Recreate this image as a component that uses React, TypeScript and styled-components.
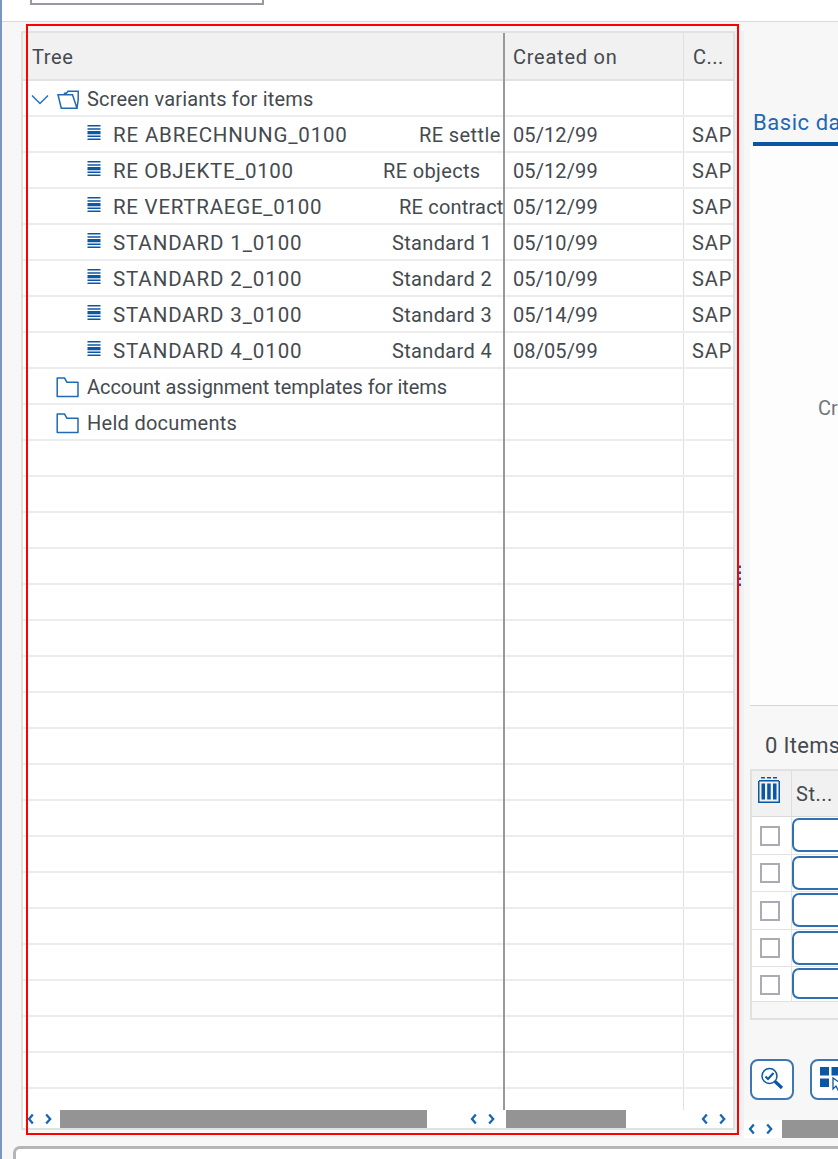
import React from "react";
import styled, { createGlobalStyle } from "styled-components";

const Global = createGlobalStyle`
  * { box-sizing: border-box; }
  body { margin: 0; background: #f7f7f7; overflow: hidden; }
`;

const Page = styled.div`
  position: relative;
  display: flex;
  flex-direction: column;
  width: 838px;
  height: 1159px;
  overflow: hidden;
  background: #f7f7f7;
  border-left: 2px solid #7896be;
  font-family: Roboto, "Liberation Sans", sans-serif;
  font-size: 20px;
  color: #454a4f;
  white-space: pre;
`;

const TopBar = styled.header`
  height: 22px;
  flex: none;
  padding-left: 28px;
  background: #fff;
  border-bottom: 1px solid #d9d9d9;
`;

const CommandField = styled.div`
  width: 234px;
  height: 5px;
  border: solid #9699a2;
  border-width: 0 2px 2px;
`;

const Workspace = styled.main`
  display: flex;
  flex: none;
  height: 1124px;
`;

const TreePanel = styled.section`
  width: 714px;
  height: 1099px;
  margin: 9px 0 0 19px;
  flex: none;
  border: 2px solid #e0e1e1;
  background: #fff;
`;

const HeadRow = styled.div`
  display: grid;
  grid-template-columns: 480px 1px 180px 49px;
  height: 48px;
  background: #f1f1f1;
  line-height: 49px;
  border-bottom: 2px solid #e2e2e2;
`;

const TreeRow = styled.div`
  display: grid;
  grid-template-columns: 480px 1px 180px 49px;
  height: 36px;
  border-bottom: 2px solid #ececec;
  line-height: 37px;
`;

const LastRow = styled(TreeRow)`
  height: 21px;
  border: 0;
`;

const Divider = styled.div<{ $end?: boolean }>`
  background: #999;
  width: 2px;
  height: ${(p) => (p.$end ? "100%" : "calc(100% + 2px)")};
`;

const Cell = styled.div<{ $pad?: number; $line?: boolean }>`
  display: flex;
  align-items: flex-start;
  overflow: hidden;
  min-width: 0;
  padding-left: ${(p) => p.$pad ?? 9}px;
  ${(p) => p.$line && "border-right: 1px solid #e0e0e0;"}
`;

const Label = styled.span<{ $track?: number; $width?: number }>`
  flex: none;
  letter-spacing: ${(p) => p.$track ?? 0}px;
  ${(p) => p.$width && `width: ${p.$width}px;`}
`;

const VariantName = styled(Label)`
  font-size: 20.5px;
`;

const IconSlot = styled.span<{ $w: number; $top: number }>`
  flex: none;
  width: ${(p) => p.$w}px;
  padding-top: ${(p) => p.$top}px;
  line-height: 0;
`;

const ScrollBar = styled.div`
  display: flex;
  align-items: center;
  height: 18px;
`;

const Thumb = styled.div<{ $w: number; $ml?: number }>`
  flex: none;
  width: ${(p) => p.$w}px;
  height: 18px;
  margin-left: ${(p) => p.$ml ?? 0}px;
  background: #949494;
`;

const Arrows = styled.span<{ $ml: number }>`
  display: flex;
  flex: none;
  margin-left: ${(p) => p.$ml}px;
`;

const Splitter = styled.div`
  display: flex;
  align-items: center;
  width: 9px;
  height: 1099px;
  margin-top: 9px;
  padding: 0 0 10px 3px;
  flex: none;
  background: #eff1f2;
`;

const Side = styled.section`
  display: flex;
  flex-direction: column;
  flex: none;
  width: 94px;
  overflow: hidden;
`;

const TabStrip = styled.nav`
  height: 124px;
  margin-left: 6px;
  padding: 84px 0 0 3px;
  flex: none;
`;

const Tab = styled.div`
  width: 160px;
  height: 40px;
  border-bottom: 4px solid #0b55a4;
  color: #1f68b4;
  font-size: 22px;
  letter-spacing: 0.55px;
  line-height: 33px;
`;

const TabBody = styled.div`
  height: 560px;
  margin-left: 6px;
  padding: 249px 0 0 68px;
  flex: none;
  background: #fdfdfd;
  border-bottom: 1px solid #d5d5d5;
  color: #74777a;
  line-height: 26px;
`;

const ItemsTitle = styled.h2`
  height: 63px;
  margin: 0 0 0 21px;
  flex: none;
  font-size: 22px;
  font-weight: 400;
  line-height: 79px;
`;

const ItemTable = styled.div`
  width: 160px;
  height: 251px;
  flex: none;
  margin-left: 6px;
  border: 2px solid #e0e1e1;
`;

const ItemHead = styled.div`
  display: flex;
  height: 46px;
  background: #f1f1f1;
  border-bottom: 1px solid #d9d9d9;
  line-height: 46px;
`;

const HeadIcon = styled.span`
  width: 40px;
  padding: 6px 0 0 5px;
  border-right: 1px solid #dedede;
  line-height: 0;
`;

const ItemRow = styled.div<{ $h: number }>`
  display: flex;
  align-items: flex-start;
  height: ${(p) => p.$h}px;
  background: #fff;
  border-bottom: 1px solid #e2e2e2;
`;

const CheckCell = styled.div<{ $top: number }>`
  width: 40px;
  height: 100%;
  padding: ${(p) => p.$top}px 0 0 8px;
  border-right: 1px solid #e2e2e2;
`;

const CheckBox = styled.div`
  width: 20px;
  height: 20px;
  border: 2px solid #a9acb4;
`;

const Field = styled.div<{ $h: number }>`
  width: 110px;
  height: ${(p) => p.$h}px;
  margin-top: 1px;
  border: 2px solid #2f70b3;
  border-radius: 7px;
  background: #fff;
`;

const Toolbar = styled.div`
  display: flex;
  gap: 16px;
  margin: 39px 0 0 6px;
  flex: none;
`;

const ToolButton = styled.button`
  display: flex;
  align-items: flex-start;
  flex: none;
  width: 44px;
  height: 41px;
  padding: 6px 0 0 8px;
  border: 2px solid #3d77b4;
  border-radius: 8px;
  background: #fff;
`;

const SideScroll = styled.div`
  display: flex;
  align-items: center;
  flex: none;
  height: 18px;
  margin-top: 20px;
  background: #fff;
`;

const BottomPanel = styled.footer`
  width: 900px;
  height: 60px;
  flex: none;
  margin-left: 11px;
  border: 3px solid #b5b5b5;
  border-radius: 7px;
  background: #fff;
`;

const FocusFrame = styled.div`
  position: absolute;
  left: 24px;
  top: 24px;
  width: 713px;
  height: 1111px;
  border: 2px solid #f00;
`;

const blue = "#0b57a4";

const ScrollArrows = ({ ml }: { ml: number }) => (
  <Arrows $ml={ml}>
    <svg width="26" height="12" viewBox="0 0 26 12" fill="none" stroke="#1766b5" strokeWidth="2.300">
      <path d="M5.800 1.500 2 6l3.800 4.500M19.200 1.500l4 4.500-4 4.500" />
    </svg>
  </Arrows>
);

const OpenFolder = () => (
  <svg width="23" height="20" viewBox="0 0 23 20" fill="none" stroke="#2069b4" strokeWidth="1.500">
    <path d="M1 4.700H15.500L20 18.300H4.300L1 4.700ZM7.500 4.500V3.300H9.500L11 1.300H21.200V10L20 18" />
  </svg>
);

const Folder = () => (
  <svg width="24" height="21" viewBox="0 0 24 21" fill="none" stroke="#2069b4" strokeWidth="1.500" strokeLinejoin="round">
    <path d="M1.200 1H8.500L11 5.300H22V19.500H1.200Z" />
  </svg>
);

const Lines = () => (
  <svg width="14" height="16" viewBox="0 0 14 16" fill={blue}>
    <path d="M.5 0h13v1.400H.5zM.5 3.200h13v1.500H.5zM.5 6h13v3.200H.5zM.5 10.600h13V12H.5zM.5 13.600h13V15H.5z" />
  </svg>
);

type Variant = { name: string; track: number; desc: string; dTrack: number; offset: number; date: string };

const variants: Variant[] = [
  { name: "RE ABRECHNUNG_0100", track: 0.84, desc: "RE settle", dTrack: 0.4, offset: 306, date: "05/12/99" },
  { name: "RE OBJEKTE_0100", track: 0.62, desc: "RE objects", dTrack: 0.35, offset: 270, date: "05/12/99" },
  { name: "RE VERTRAEGE_0100", track: 0.74, desc: "RE contract", dTrack: 0.2, offset: 286, date: "05/12/99" },
  { name: "STANDARD 1_0100", track: 0.88, desc: "Standard 1", dTrack: 0.35, offset: 279, date: "05/10/99" },
  { name: "STANDARD 2_0100", track: 0.88, desc: "Standard 2", dTrack: 0.35, offset: 279, date: "05/10/99" },
  { name: "STANDARD 3_0100", track: 0.88, desc: "Standard 3", dTrack: 0.35, offset: 279, date: "05/14/99" },
  { name: "STANDARD 4_0100", track: 0.88, desc: "Standard 4", dTrack: 0.35, offset: 279, date: "08/05/99" },
];

const folders = [
  { name: "Account assignment templates for items", track: -0.06 },
  { name: "Held documents", track: 0.28 },
];

const itemRows = [
  { h: 38, field: 34, top: 9 },
  { h: 37, field: 34, top: 8 },
  { h: 38, field: 34, top: 9 },
  { h: 37, field: 34, top: 8 },
  { h: 35, field: 31, top: 8 },
];

export default function App() {
  return (
    <Page>
      <Global />
      <TopBar>
        <CommandField />
      </TopBar>
      <Workspace>
        <TreePanel>
          <HeadRow>
            <Cell $pad={9}><Label $track={0.6}>Tree</Label></Cell>
            <Divider />
            <Cell $line $pad={9}><Label $track={0.75}>Created on</Label></Cell>
            <Cell $pad={9}><Label $track={0.5}>C...</Label></Cell>
          </HeadRow>
          <TreeRow>
            <Cell $pad={8}>
              <IconSlot $w={26} $top={13}>
                <svg width="18" height="12" viewBox="0 0 18 12" fill="none" stroke="#2670b8" strokeWidth="1.500">
                  <path d="M1 1.500 9 9.500 17 1.500" />
                </svg>
              </IconSlot>
              <IconSlot $w={30} $top={9}><OpenFolder /></IconSlot>
              <Label $track={0.18}>Screen variants for items</Label>
            </Cell>
            <Divider />
            <Cell $line />
            <Cell />
          </TreeRow>
          {variants.map((v) => (
            <TreeRow key={v.name}>
              <Cell $pad={64}>
                <IconSlot $w={26} $top={8}><Lines /></IconSlot>
                <VariantName $track={v.track} $width={v.offset}>{v.name}</VariantName>
                <Label $track={v.dTrack}>{v.desc}</Label>
              </Cell>
              <Divider />
              <Cell $line $pad={9}><Label $track={0.1}>{v.date}</Label></Cell>
              <Cell $pad={8}><Label $track={0.9}>SAP</Label></Cell>
            </TreeRow>
          ))}
          {folders.map((f) => (
            <TreeRow key={f.name}>
              <Cell $pad={33}>
                <IconSlot $w={31} $top={8}><Folder /></IconSlot>
                <Label $track={f.track}>{f.name}</Label>
              </Cell>
              <Divider />
              <Cell $line />
              <Cell />
            </TreeRow>
          ))}
          {Array.from({ length: 18 }, (_, i) => (
            <TreeRow key={i}>
              <Cell />
              <Divider />
              <Cell $line />
              <Cell />
            </TreeRow>
          ))}
          <LastRow>
            <Cell />
            <Divider $end />
            <Cell $line />
            <Cell />
          </LastRow>
          <ScrollBar>
            <ScrollArrows ml={4} />
            <Thumb $w={367} $ml={7} />
            <ScrollArrows ml={43} />
            <Thumb $w={120} $ml={10} />
            <ScrollArrows ml={75} />
          </ScrollBar>
        </TreePanel>
        <Splitter>
          <svg width="4" height="22" viewBox="0 0 4 22" fill={blue}>
            <path d="M.500 .500h2.500v2.500h-2.500zM.500 6.500h2.500v2.500h-2.500zM.500 12.500h2.500v2.500h-2.500zM.500 18.500h2.500v2.500h-2.500z" />
          </svg>
        </Splitter>
        <Side>
          <TabStrip>
            <Tab>Basic data</Tab>
          </TabStrip>
          <TabBody>Credit</TabBody>
          <ItemsTitle><Label $track={0.3}>0 Items</Label></ItemsTitle>
          <ItemTable>
            <ItemHead>
              <HeadIcon>
                <svg width="24" height="28" viewBox="0 0 24 28" fill={blue}>
                  <path d="M4 0h4v1.500H4zM10 0h4v1.500h-4zM16 0h4v1.500h-4zM2 3h20v1.500H2zM1 4h1.500v22H1zM21.500 4H23v22h-1.500zM1 24.500h22V26H1zM4.500 6.500h3.500v16H4.500zM10.200 6.500h3.500v16h-3.500zM16 6.500h3.500v16H16z" />
                </svg>
              </HeadIcon>
              <Cell $pad={4}><Label $track={0.5}>St...</Label></Cell>
            </ItemHead>
            {itemRows.map((r, i) => (
              <ItemRow key={i} $h={r.h}>
                <CheckCell $top={r.top}><CheckBox /></CheckCell>
                <Field $h={r.field} />
              </ItemRow>
            ))}
          </ItemTable>
          <Toolbar>
            <ToolButton>
              <svg width="24" height="24" viewBox="0 0 24 24" fill="none" stroke={blue} strokeWidth="1.500">
                <circle cx="9.500" cy="9" r="7.500" />
                <path d="M5.500 9.500 8 12l5.500-6" strokeWidth="2" />
                <path d="m15 14.500 7 6.500" strokeWidth="3.200" />
              </svg>
            </ToolButton>
            <ToolButton>
              <svg width="26" height="24" viewBox="0 0 26 24" fill={blue}>
                <path d="M0 0h9v8.500H0zM11.500 0H20v8.500h-8.500zM0 11.500h9V20H0z" />
                <path d="M13 11v11l3-3 2 4 3-1-2-4h4z" fill="#fff" stroke={blue} strokeWidth="1.300" />
              </svg>
            </ToolButton>
          </Toolbar>
          <SideScroll>
            <ScrollArrows ml={4} />
            <Thumb $w={100} $ml={8} />
          </SideScroll>
        </Side>
      </Workspace>
      <BottomPanel />
      <FocusFrame />
    </Page>
  );
}
